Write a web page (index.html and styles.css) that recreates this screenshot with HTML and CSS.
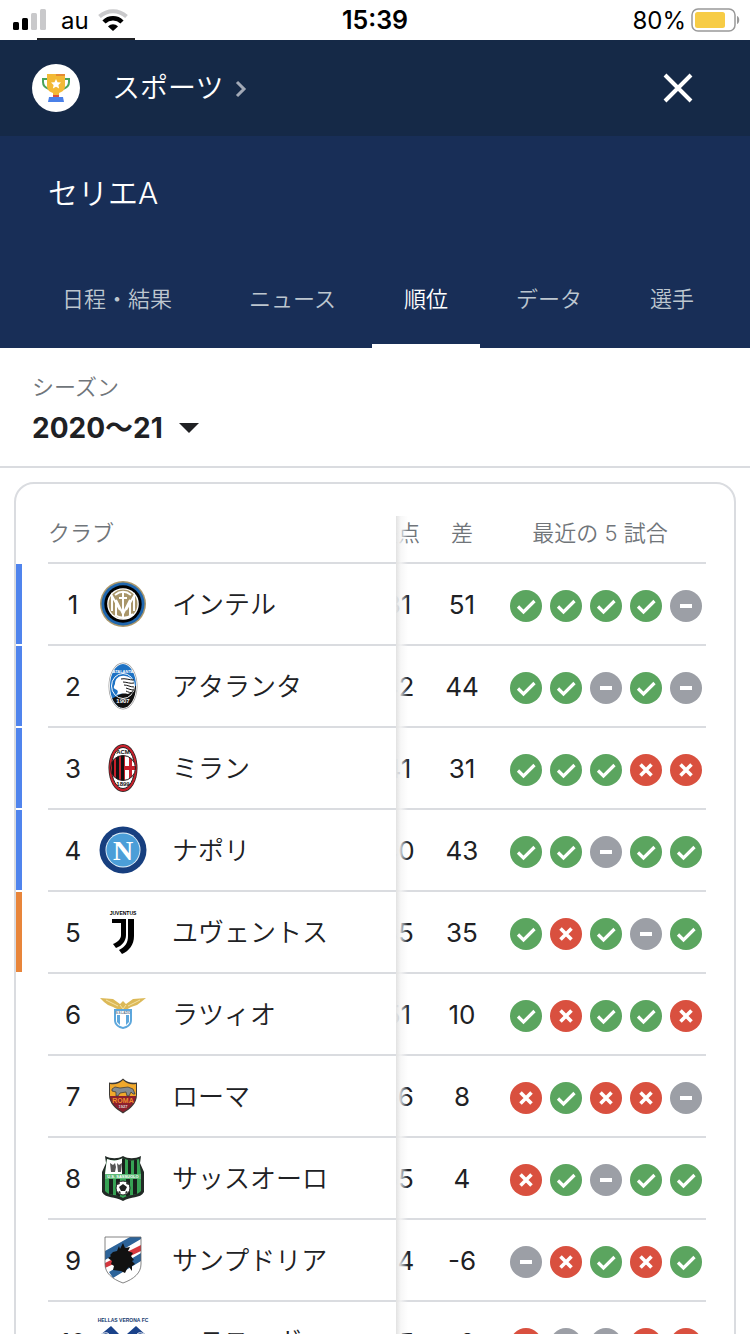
FILE: index.html
```html
<!DOCTYPE html>
<html lang="ja">
<head>
  <meta charset="UTF-8" />
  <meta name="viewport" content="width=device-width, initial-scale=1.0"/>
  <title>セリエA - 順位</title>
  <link rel="stylesheet" href="styles.css">
</head>
<body>
  <!-- Clip shapes, kept apart: they stop working inside display: none -->
  <svg class="clips" aria-hidden="true">
    <clipPath id="oval"><ellipse cx="24" cy="24" rx="13" ry="22"/></clipPath>
    <clipPath id="milanBall"><circle cx="24" cy="24" r="12.500"/></clipPath>
    <clipPath id="sassShield"><path d="M8 5c5 2 11 2 16-1 5 3 11 3 16 1l2 15v17c-4 5-12 3-18 7-6-4-14-2-18-7V20z"/></clipPath>
    <clipPath id="sampShield"><path d="M6 1h36v27c0 9-7 15-18 19C13 43 6 37 6 28z"/></clipPath>
  </svg>

  <!-- Icons and crests -->
  <svg class="sprites" aria-hidden="true">
    <symbol id="win" viewBox="0 0 32 32">
      <circle cx="16" cy="16" r="16" fill="#5ba55f"/>
      <path d="M8 16.500l5.500 5.500L24.500 11" fill="none" stroke="#fff" stroke-width="3.200"/>
    </symbol>
    <symbol id="draw" viewBox="0 0 32 32">
      <circle cx="16" cy="16" r="16" fill="#9c9fa6"/>
      <path d="M10 16h12" stroke="#fff" stroke-width="4"/>
    </symbol>
    <symbol id="loss" viewBox="0 0 32 32">
      <circle cx="16" cy="16" r="16" fill="#d9503f"/>
      <path d="M10.500 10.500l11 11M21.500 10.500l-11 11" stroke="#fff" stroke-width="3.600"/>
    </symbol>

    <symbol id="inter" viewBox="0 0 48 48">
      <circle cx="24" cy="24" r="23" fill="#a9966a"/>
      <circle cx="24" cy="24" r="21.500" fill="#1f66ae"/>
      <circle cx="24" cy="24" r="18.700" fill="#000"/>
      <circle cx="24" cy="24" r="15.800" fill="#fff"/>
      <circle cx="24" cy="24" r="14.500" fill="#a9966a"/>
      <g fill="none" stroke="#fff" stroke-width="2">
        <path d="M13 31V16l8 14M24 11v26M35 31V16l-8 14"/>
        <path d="M17 35V20l7 14 7-14v15"/>
        <path d="M16 15c5-4 11-4 16 0M16 35c6 4 12 4 18-1M20 18h8"/>
      </g>
    </symbol>

    <symbol id="atalanta" viewBox="0 0 48 48">
      <ellipse cx="24" cy="24" rx="14.500" ry="23.500" fill="#999"/>
      <ellipse cx="24" cy="24" rx="13.800" ry="22.800" fill="#fff"/>
      <g clip-path="url(#oval)">
        <path d="M0 0h48v12L20 48H0z" fill="#1d72c4"/>
        <path d="M8 39l14-7 18-10v26H8z" fill="#111"/>
        <ellipse cx="24" cy="24" rx="11.500" ry="12.500" fill="none" stroke="#fff" stroke-width="1"/>
        <path d="M17 33c3-3 2-5-1-6-2-1-1-3 0-5 0-6 5-9 10-8 7 1 10 6 9 12-1 3-3 5-6 6-5-1-8 0-12 1z" fill="#fff"/>
        <path d="M22 17c4-1 8 1 13 1M24 20c4 0 7 2 11 1M25 23c4 0 6 2 10 2M27 26c3 1 5 2 8 2M27 29c2 1 5 2 7 2" stroke="#111" stroke-width="1" fill="none"/>
      </g>
      <text x="24" y="11" class="crest-text" font-size="4" fill="#fff">ATALANTA</text>
      <text x="24" y="41" class="crest-text" font-size="6" fill="#fff">1907</text>
    </symbol>

    <symbol id="milan" viewBox="0 0 48 48">
      <ellipse cx="24" cy="24" rx="14.500" ry="24" fill="#222"/>
      <ellipse cx="24" cy="24" rx="13.800" ry="23.200" fill="#c8202b"/>
      <ellipse cx="24" cy="24" rx="11.500" ry="20.500" fill="#fff" stroke="#222" stroke-width="1"/>
      <g clip-path="url(#milanBall)">
        <path d="M10 10h28v28H10z" fill="#c8202b"/>
        <path d="M13 10h2v28h-2zM17 10h3v28h-3zM22 10h3v28h-3z" fill="#111"/>
        <path d="M26 10h4v12h-4zM33 10h6v12h-6zM26 26h4v12h-4zM33 26h6v12h-6z" fill="#fff"/>
      </g>
      <circle cx="24" cy="24" r="12.500" fill="none" stroke="#222"/>
      <text x="24" y="10" class="crest-text" font-size="6" fill="#111">ACM</text>
      <text x="24" y="42" class="crest-text" font-size="6" fill="#111">1899</text>
    </symbol>

    <symbol id="napoli" viewBox="0 0 48 48">
      <circle cx="24" cy="24" r="23.500" fill="#173f7f"/>
      <circle cx="24" cy="24" r="17.500" fill="#e8f3fa"/>
      <circle cx="24" cy="24" r="16.600" fill="#4b9ed8"/>
      <text x="24" y="34" class="crest-serif" font-size="28" fill="#fff">N</text>
    </symbol>

    <symbol id="juventus" viewBox="0 0 48 48">
      <text x="24" y="7" class="crest-text" font-size="5" fill="#000">JUVENTUS</text>
      <path d="M13 11h14v16c0 6-4 11-10 13l-3-4c5-2 8-5 8-9V15h-9z"/>
      <path d="M29 11h6v17c0 9-5 15-12 18l-3-4c6-3 9-7 9-14z"/>
    </symbol>

    <symbol id="lazio" viewBox="0 0 48 48">
      <path d="M1 8l13 1 7 5 3-3 3 3 7-5 13-1-5 4-4 3-6 2-5 3h-7l-6-3-5-2-4-3z" fill="#dcb958"/>
      <path d="M7 10l12 6M41 10l-12 6M21 15l3 4 3-4" stroke="#f5e2a4" stroke-width="1" fill="none"/>
      <path d="M15 19h18v11c0 5-4 8-9 9-5-1-9-4-9-9z" fill="#5da7dc"/>
      <path d="M17 21h14v9c0 4-3 6-7 7-4-1-7-3-7-7z" fill="#fff"/>
      <path d="M18 25h3v10l-3-3zM27 25h3v7l-3 3z" fill="#5da7dc"/>
      <text x="24" y="24" class="crest-text" font-size="3" fill="#59738a">S.S.LAZIO</text>
    </symbol>

    <symbol id="roma" viewBox="0 0 48 48">
      <path d="M24 6.500c4 4 9 5 14 4v12c0 9-6 14-14 19-8-5-14-10-14-19v-12c5 1 10 0 14-4z" fill="#3d3935"/>
      <path d="M24 8c4 4 8 5 13 4v12H11V12c5 1 9 0 13-4z" fill="#f0a82c"/>
      <path d="M11 24h26c-1 7-6 12-13 16-7-4-12-9-13-16z" fill="#8d1f2d"/>
      <path d="M13 17l3-2 5 1 8-1 5 2 2 5h-2l-2-2-2 4h-2l-1-4-6 1-2 3h-2v-4l-4-1z" fill="#858b90" stroke="#333" stroke-width=".7"/>
      <text x="24" y="31" class="crest-text" font-size="7" fill="#ef8c2c">ROMA</text>
      <text x="24" y="36" class="crest-text" font-size="4" fill="#ddd">1927</text>
    </symbol>

    <symbol id="sassuolo" viewBox="0 0 48 48">
      <path d="M6 2c6 3 13 3 18 0 5 3 12 3 18 0l-1 7 4 9v20c-4 7-13 4-21 9-8-5-17-2-21-9V18l4-9z" fill="#222a26"/>
      <g clip-path="url(#sassShield)">
        <path d="M5 2h38v44H5z" fill="#36a354"/>
        <path d="M5 2h19v18H5z" fill="#fff"/>
        <path d="M23 2h3v18h-3zM29 2h3v18h-3zM35 2h3v18h-3zM10 25h4v18h-4zM17 25h4v18h-4zM27 25h4v18h-4zM34 25h4v18h-4z" fill="#18211c"/>
        <path d="M11 9l3 2 2-2 1 4-1 5h-4zM18 9l2 2 3-2-1 9h-3z" fill="#555"/>
        <path d="M5 20h38v5H5z" fill="#5dba77"/>
      </g>
      <text x="24" y="24" class="crest-text" font-size="4" fill="#fff">U.S. SASSUOLO</text>
      <circle cx="24" cy="34" r="7" fill="#fff" stroke="#222"/>
      <path d="M24 30l4 3-2 4h-4l-2-4zM18 31l2-3 1 2zM30 31l-2-3-1 2zM19 38l2-1 1 3zM29 38l-2-1-1 3z" fill="#222"/>
    </symbol>

    <symbol id="sampdoria" viewBox="0 0 48 48">
      <g clip-path="url(#sampShield)">
        <path d="M6 1h36v46H6z" fill="#fff"/>
        <path d="M6 15L31 1h11v2L6 24zM10 36l32-19v8L14 42z" fill="#2c6399"/>
        <path d="M6 27l36-18v6L6 32z" fill="#d5363d"/>
        <path d="M9 22l3-2-1-1 3-3 4-1 2-5 1 3 3-6 2 5 5-1-2 4 5 2-2 3 3 4-2 1 3 3-3 2v5l-3-4-2 2-2 4-4-2-8-1 1-4-3-2 1-3z" fill="#111"/>
      </g>
      <path d="M6 1h36v27c0 9-7 15-18 19C13 43 6 37 6 28z" fill="none" stroke="#666" stroke-width=".8"/>
    </symbol>

    <symbol id="verona" viewBox="0 0 48 48">
      <text x="24" y="4" class="crest-text" font-size="5" fill="#15396f">HELLAS VERONA FC</text>
      <path d="M12 8l8 8-3 4h14l-3-4 9-8 11 10v18L24 48 0 36V18z" fill="#1a428a"/>
      <path d="M3 16c5-3 9 0 7 4M45 16c-5-3-9 0-7 4" fill="none" stroke="#fff"/>
    </symbol>
  </svg>

  <div class="status-bar">
    <div class="carrier">
      <svg width="34" height="22" viewBox="0 0 34 22" aria-hidden="true">
        <rect x="0" y="13" width="6" height="8" rx="1.500"/>
        <rect x="9" y="9" width="6" height="12" rx="1.500"/>
        <rect x="18" y="4" width="6" height="17" rx="1.500" fill="#c9c9cb"/>
        <rect x="27" y="0" width="6" height="21" rx="1.500" fill="#c9c9cb"/>
      </svg>
      <span class="carrier-name">au</span>
      <svg width="30" height="22" viewBox="0 0 30 22" aria-hidden="true">
        <path d="M1.500 7.500c8-7 19-7 27 0" fill="none" stroke="#c9c9cb" stroke-width="4"/>
        <path d="M6 13c5-5 13-5 18 0" fill="none" stroke="#000" stroke-width="4.500"/>
        <path d="M10 17.500c3-3 7-3 10 0L15 22z"/>
      </svg>
    </div>
    <span class="clock">15:39</span>
    <div class="battery">
      <span>80%</span>
      <svg width="49" height="24" viewBox="0 0 49 24" aria-hidden="true">
        <rect x="1" y="1" width="43" height="22" rx="6" fill="#fff" stroke="#999" stroke-width="1.500"/>
        <rect x="4" y="4" width="30" height="16" rx="2.500" fill="#f7cc45"/>
        <path d="M46 8c3 1 3 7 0 8z" fill="#999"/>
      </svg>
    </div>
    <div class="status-line"></div>
  </div>

  <header class="top-bar">
    <svg class="logo" viewBox="0 0 48 48" aria-hidden="true">
      <circle cx="24" cy="24" r="24" fill="#fff"/>
      <path d="M16 15h-5v3c0 4 3 6 6 7M32 15h5v3c0 4-3 6-6 7" fill="none" stroke="#4aa35a" stroke-width="2"/>
      <path d="M15 10h18v12c0 4-3 6-6 7v3h-6v-3c-3-1-6-3-6-7z" fill="#f3b935"/>
      <path d="M24 10h9v2h-9z" fill="#e58b32"/>
      <path d="M24 15l1.500 3.200 3.500.4-2.600 2.400.7 3.500-3.100-1.800-3.100 1.800.7-3.500-2.600-2.400 3.500-.4z" fill="#fff"/>
      <path d="M21 31h6v2h-6z" fill="#d9503f"/>
      <path d="M17 33h14l1 5H16z" fill="#4a80e8"/>
    </svg>
    <a class="top-link" href="#">
      <span>スポーツ</span>
      <svg width="12" height="18" viewBox="0 0 12 18" aria-hidden="true"><path d="M2 2l7 7-7 7" fill="none" stroke="#a2a9b6" stroke-width="3"/></svg>
    </a>
    <button class="close" aria-label="閉じる">
      <svg width="30" height="30" viewBox="0 0 30 30"><path d="M2 2l26 26M28 2L2 28" stroke="#fff" stroke-width="4"/></svg>
    </button>
  </header>

  <section class="league">
    <h1>セリエA</h1>
    <nav class="tabs">
      <a class="tab" href="#">日程・結果</a>
      <a class="tab" href="#">ニュース</a>
      <a class="tab active" href="#" aria-current="page">順位</a>
      <a class="tab" href="#">データ</a>
      <a class="tab" href="#">選手</a>
    </nav>
  </section>

  <section class="season">
    <label for="season">シーズン</label>
    <div class="season-select">
      <select id="season">
        <option>2020〜21</option>
      </select>
      <svg width="20" height="10" viewBox="0 0 20 10" aria-hidden="true"><path d="M0 0h20L10 10z" fill="#202124"/></svg>
    </div>
  </section>

  <main class="card">
    <table>
      <thead>
        <tr>
          <td class="zone"></td>
          <th class="club" scope="col">クラブ</th>
          <th class="against" scope="col"><span>失点</span></th>
          <th class="diff" scope="col">差</th>
          <th class="form" scope="col">最近の 5 試合</th>
        </tr>
      </thead>
      <tbody id="standings"></tbody>
    </table>
  </main>

  <script>
    // form: w = win, d = draw, l = loss
    const clubs = [
      { name: 'インテル', crest: 'inter', against: 31, diff: 51, form: 'wwwwd', zone: 'champions' },
      { name: 'アタランタ', crest: 'atalanta', against: 42, diff: 44, form: 'wwdwd', zone: 'champions' },
      { name: 'ミラン', crest: 'milan', against: 41, diff: 31, form: 'wwwll', zone: 'champions' },
      { name: 'ナポリ', crest: 'napoli', against: 40, diff: 43, form: 'wwdww', zone: 'champions' },
      { name: 'ユヴェントス', crest: 'juventus', against: 35, diff: 35, form: 'wlwdw', zone: 'europa' },
      { name: 'ラツィオ', crest: 'lazio', against: 51, diff: 10, form: 'wlwwl', zone: '' },
      { name: 'ローマ', crest: 'roma', against: 56, diff: 8, form: 'lwlld', zone: '' },
      { name: 'サッスオーロ', crest: 'sassuolo', against: 55, diff: 4, form: 'lwdww', zone: '' },
      { name: 'サンプドリア', crest: 'sampdoria', against: 54, diff: -6, form: 'dlwlw', zone: '' },
      { name: 'ヘラス・ヴェローナ', crest: 'verona', against: 45, diff: -2, form: 'lddll', zone: '' }
    ];
    const results = { w: ['win', '勝ち'], d: ['draw', '引き分け'], l: ['loss', '負け'] };

    document.getElementById('standings').innerHTML = clubs.map((club, index) => `
      <tr>
        <td class="zone"><div class="zone-bar ${club.zone}"></div></td>
        <th class="club" scope="row">
          <div class="club-info">
            <span class="rank">${index + 1}</span>
            <svg class="crest" aria-hidden="true"><use href="#${club.crest}"/></svg>
            <span class="name">${club.name}</span>
          </div>
        </th>
        <td class="against"><span>${club.against}</span></td>
        <td class="diff">${club.diff}</td>
        <td class="form">
          <div class="form-icons">
            ${[...club.form].map(r => `<svg role="img" aria-label="${results[r][1]}"><use href="#${results[r][0]}"/></svg>`).join('')}
          </div>
        </td>
      </tr>
    `).join('');
  </script>
</body>
</html>
```
FILE: styles.css
```css
* {
  box-sizing: border-box;
}
body {
  margin: 0;
  height: 100vh;
  overflow: hidden;
  background: #fff;
  color: #202124;
  font-family: Inter, "Noto Sans CJK JP", sans-serif;
  font-size: 26px;
  font-weight: 400;
}
a {
  color: inherit;
  text-decoration: none;
}
.sprites {
  display: none;
}
.clips {
  position: absolute;
  width: 0;
  height: 0;
}
symbol {
  overflow: visible;
}
.crest-text {
  font-family: "Liberation Sans", sans-serif;
  font-weight: bold;
  text-anchor: middle;
}
.crest-serif {
  font-family: "Liberation Serif", serif;
  font-weight: bold;
  text-anchor: middle;
}

/* Status bar */
.status-bar {
  position: relative;
  display: grid;
  grid-template-columns: 1fr auto 1fr;
  align-items: center;
  height: 40px;
  padding: 0 10px 0 10px;
  color: #000;
  font-size: 24px;
}
.carrier {
  display: flex;
  align-items: center;
  padding-left: 3px;
}
.carrier-name {
  margin: 0 9px 0 14px;
}
.clock {
  font-size: 25px;
  font-weight: 600;
}
.battery {
  display: flex;
  align-items: center;
  justify-content: flex-end;
  gap: 5px;
}
.status-line {
  position: absolute;
  left: 37px;
  bottom: 0;
  width: 98px;
  height: 2px;
  background: #202124;
}

/* Header */
.top-bar {
  display: flex;
  align-items: center;
  height: 96px;
  padding: 0 50px 0 32px;
  background: #152947;
  color: #fff;
}
.logo {
  width: 48px;
  height: 48px;
}
.top-link {
  display: flex;
  align-items: center;
  gap: 12px;
  margin-left: 32px;
  font-size: 28px;
  font-weight: 350;
}
.top-link span {
  padding-bottom: 4px;
}
.top-link svg {
  margin-top: 2px;
}
.close {
  display: flex;
  margin-left: auto;
  padding: 7px;
  border: none;
  background: none;
  cursor: pointer;
}
.league {
  background: #182e57;
  color: #fff;
}
h1 {
  margin: 0;
  padding: 36px 48px 38px;
  font-size: 30px;
  font-weight: 350;
  line-height: 42px;
}
.tabs {
  display: flex;
  gap: 4px;
  padding-left: 30px;
}
.tab {
  padding: 2px 32px 0;
  border-bottom: 4px solid transparent;
  color: #bdc6cf;
  font-size: 22px;
  font-weight: 350;
  line-height: 90px;
  white-space: nowrap;
}
.tab:first-child {
  margin-right: 9px;
}
.tab.active {
  border-color: #fff;
  color: #fff;
}

/* Season picker */
.season {
  padding: 24px 32px 20px;
  border-bottom: 2px solid #dadce0;
}
.season label {
  display: block;
  margin-bottom: 8px;
  color: #70757a;
  font-size: 22px;
  font-weight: 350;
  line-height: 30px;
}
.season-select {
  display: flex;
  align-items: center;
  gap: 16px;
}
.season-select select {
  appearance: none;
  height: 36px;
  padding: 0;
  border: none;
  background: none;
  color: #202124;
  font: inherit;
  font-size: 28px;
  font-weight: 700;
}

/* Standings */
.card {
  margin: 14px 14px 0;
  padding: 32px 28px 0 0;
  border: 2px solid #dadce0;
  border-radius: 20px;
}
table {
  width: 100%;
  table-layout: fixed;
  border-spacing: 0;
}
th, td {
  height: 82px;
  padding: 0;
  border-bottom: 2px solid #dadce0;
  font-weight: 400;
  text-align: center;
}
thead th, thead td {
  height: 48px;
  padding-bottom: 12px;
  color: #70757a;
  font-size: 22px;
  font-weight: 350;
  line-height: 32px;
}
.zone {
  width: 32px;
  border-color: transparent;
}
.zone-bar {
  width: 6px;
  height: 80px;
}
.champions {
  background: #5084ed;
}
.europa {
  background: #e8853a;
}
.club {
  position: relative;
  z-index: 1;
  background: #fff;
  text-align: left;
}
/* Shadow over the scrolled columns */
.club::after {
  content: "";
  position: absolute;
  top: 0;
  bottom: -2px;
  left: 100%;
  width: 12px;
  background: linear-gradient(to right, #e2e2e2, rgba(245, 245, 245, 0.8) 40%, rgba(255, 255, 255, 0));
}
.club-info {
  display: flex;
  align-items: center;
  padding-right: 8px;
}
.rank {
  flex: none;
  width: 50px;
  text-align: center;
}
.crest {
  flex: none;
  width: 48px;
  height: 48px;
  margin: 0 25px 0 1px;
  overflow: visible;
}
.name {
  min-width: 0;
  padding-bottom: 4px;
  overflow: hidden;
  font-weight: 350;
  text-overflow: ellipsis;
  white-space: nowrap;
}
.against {
  width: 34px;
}
.against span {
  display: block;
  width: 64px;
  margin-left: -30px;
}
.diff {
  width: 64px;
}
.form {
  width: 212px;
}
.form-icons {
  display: flex;
  gap: 8px;
  padding: 4px 0 0 16px;
}
.form-icons svg {
  width: 32px;
  height: 32px;
}
```
